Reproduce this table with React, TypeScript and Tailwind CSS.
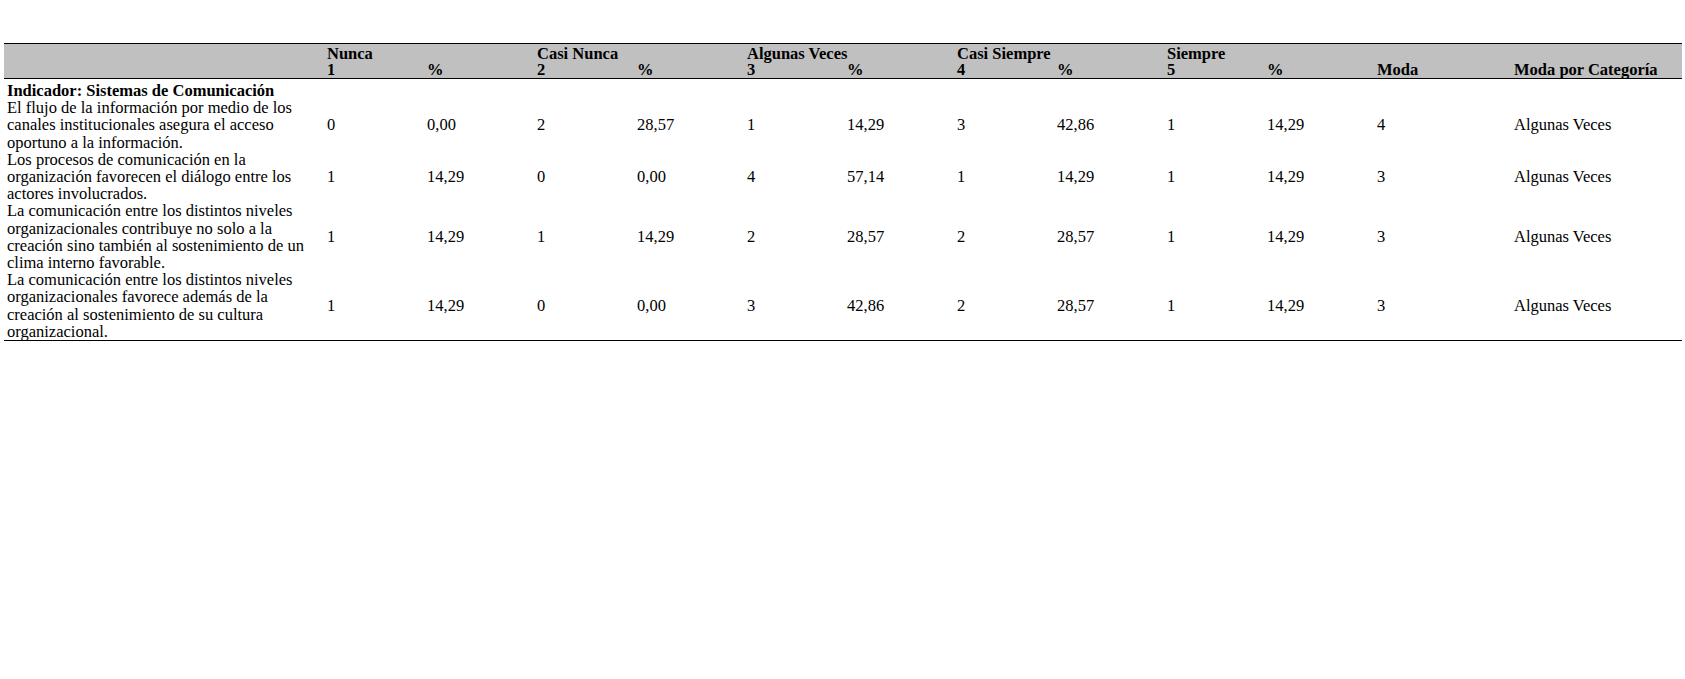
const groups = ["Nunca", "Casi Nunca", "Algunas Veces", "Casi Siempre", "Siempre"];

const rows = [
  {
    lines: [
      "El flujo de la información por medio de los",
      "canales institucionales asegura el acceso",
      "oportuno a la información.",
    ],
    values: ["0", "0,00", "2", "28,57", "1", "14,29", "3", "42,86", "1", "14,29", "4", "Algunas Veces"],
  },
  {
    lines: [
      "Los procesos de comunicación en la",
      "organización favorecen el diálogo entre los",
      "actores involucrados.",
    ],
    values: ["1", "14,29", "0", "0,00", "4", "57,14", "1", "14,29", "1", "14,29", "3", "Algunas Veces"],
  },
  {
    lines: [
      "La comunicación entre los distintos niveles",
      "organizacionales contribuye no solo a la",
      "creación sino también al sostenimiento de un",
      "clima interno favorable.",
    ],
    values: ["1", "14,29", "1", "14,29", "2", "28,57", "2", "28,57", "1", "14,29", "3", "Algunas Veces"],
  },
  {
    lines: [
      "La comunicación entre los distintos niveles",
      "organizacionales favorece además de la",
      "creación al sostenimiento de su cultura",
      "organizacional.",
    ],
    values: ["1", "14,29", "0", "0,00", "3", "42,86", "2", "28,57", "1", "14,29", "3", "Algunas Veces"],
  },
];

export default function App() {
  return (
    <div className="min-h-screen bg-white pt-[43px] pl-[4px] font-['Liberation_Serif',serif] text-[16.5px] text-black">
      <table className="w-[1678px] table-fixed border-collapse">
        <colgroup>
          <col className="w-[320px]" />
          {groups.map((g) => [
            <col key={g + "n"} className="w-[100px]" />,
            <col key={g + "p"} className="w-[110px]" />,
          ])}
          <col className="w-[137px]" />
          <col className="w-[171px]" />
        </colgroup>
        <thead className="bg-[#c0c0c0] leading-[16px]">
          <tr className="border-t border-black">
            <th className="px-[3px] pt-[2px] pb-0" />
            {groups.map((g) => [
              <th key={g} className="px-[3px] pt-[2px] pb-0 text-left font-bold whitespace-nowrap">
                {g}
              </th>,
              <th key={g + "x"} className="px-[3px] pt-[2px] pb-0" />,
            ])}
            <th className="px-[3px] pt-[2px] pb-0" />
            <th className="px-[3px] pt-[2px] pb-0" />
          </tr>
          <tr className="border-b border-black">
            <th className="px-[3px] py-0" />
            {groups.map((g, i) => [
              <th key={g} className="px-[3px] py-0 text-left font-bold">
                {i + 1}
              </th>,
              <th key={g + "p"} className="px-[3px] py-0 text-left font-bold">
                %
              </th>,
            ])}
            <th className="px-[3px] py-0 text-left font-bold">Moda</th>
            <th className="px-[3px] py-0 text-left font-bold whitespace-nowrap">Moda por Categoría</th>
          </tr>
        </thead>
        <tbody className="leading-[17.2px]">
          <tr>
            <td className="px-[3px] pt-[3px] pb-0 font-bold whitespace-nowrap">
              Indicador: Sistemas de Comunicación
            </td>
            <td colSpan={12} />
          </tr>
          {rows.map((r, idx) => (
            <tr key={idx} className={idx === rows.length - 1 ? "border-b border-black" : ""}>
              <td className="px-[3px] py-0 align-middle whitespace-nowrap">
                {r.lines.map((l, k) => (
                  <div key={k}>{l}</div>
                ))}
              </td>
              {r.values.map((v, j) => (
                <td key={j} className="px-[3px] py-0 align-middle whitespace-nowrap">
                  {v}
                </td>
              ))}
            </tr>
          ))}
        </tbody>
      </table>
    </div>
  );
}
